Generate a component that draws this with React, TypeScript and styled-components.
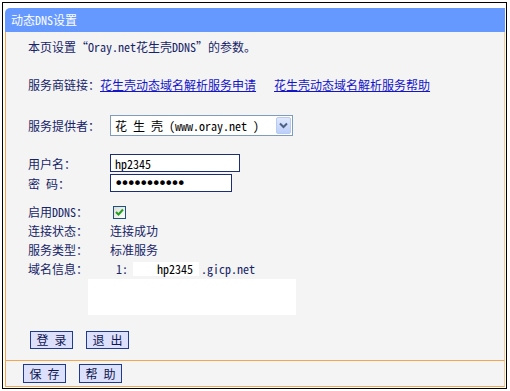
import React from 'react';
import styled, { createGlobalStyle } from 'styled-components';

const GlobalStyle = createGlobalStyle`
  html, body {
    margin: 0;
    padding: 0;
    background: #fff;
  }
  body {
    font-family: "Noto Sans CJK SC", "Liberation Sans", sans-serif;
    font-size: 12px;
    font-feature-settings: "hwid";
    color: #172468;
  }
`;

const Frame = styled.div`
  box-sizing: border-box;
  width: 505px;
  height: 387px;
  margin: 2px 0 0 2px;
  padding: 5px 1px 1px 2px;
  border: 1px solid #000;
  display: flex;
  flex-direction: column;
`;

const Header = styled.div`
  height: 24px;
  line-height: 24px;
  padding-left: 6px;
  background: #6699ff;
  color: #fff;
  border-top-left-radius: 5px;
`;

const Body = styled.div`
  box-sizing: border-box;
  height: 328px;
  padding: 7px 0 0 22px;
  background: #f4f4f4;
  border-left: 1px solid #f3a650;
  border-right: 1px solid #f6c98c;
  display: flex;
  flex-direction: column;
`;

const Footer = styled.div`
  box-sizing: border-box;
  height: 27px;
  padding: 3px 0 0 17px;
  background: #f4f4f4;
  border: 1px solid #f3a650;
  border-right-color: #f6c98c;
  display: flex;
  gap: 13px;
`;

const Line = styled.div<{ $top?: number }>`
  margin-top: ${p => p.$top ?? 0}px;
  line-height: 16px;
  display: flex;
  gap: 18px;
`;

const Link = styled.a`
  color: #1515c8;
  text-decoration: underline;
  cursor: pointer;
`;

const Field = styled.div<{ $top: number; $h: number }>`
  margin-top: ${p => p.$top}px;
  height: ${p => p.$h}px;
  display: flex;
  align-items: center;
`;

const Label = styled.span`
  width: 82px;
  flex: none;
`;

const SelectBox = styled.div`
  box-sizing: border-box;
  width: 183px;
  height: 21px;
  padding-left: 4px;
  border: 1px solid #7f9db9;
  background: #fff;
  color: #000;
  display: flex;
  align-items: center;
  justify-content: space-between;
`;

const DropButton = styled.span`
  box-sizing: border-box;
  width: 15px;
  height: 17px;
  margin-right: 1px;
  border: 1px solid #b8cbf2;
  border-radius: 2px;
  background: linear-gradient(#dfe8fd, #bccff8);
  display: flex;
  align-items: center;
  justify-content: center;
`;

const TextInput = styled.input<{ $w: number }>`
  box-sizing: border-box;
  width: ${p => p.$w}px;
  height: 18px;
  margin: 0;
  padding: 0 4px;
  border: 1px solid #1c2f6e;
  background: #fff;
  color: #000;
  font: inherit;
  outline: none;

  &[type='password'] {
    font-family: "DejaVu Sans", sans-serif;
    font-size: 16px;
    letter-spacing: -3.2px;
    padding-left: 3px;
  }
`;

const Check = styled.span`
  box-sizing: border-box;
  width: 13px;
  height: 13px;
  margin: 2px 0 0 3px;
  border: 1px solid #1c5180;
  background: linear-gradient(135deg, #dcdcd7, #fff);
  display: flex;
  align-items: center;
  justify-content: center;
`;

const Index = styled.span`
  margin-left: 6px;
`;

const Masked = styled.span`
  margin-left: 5px;
  width: 66px;
  height: 14px;
  line-height: 14px;
  padding-left: 24px;
  box-sizing: border-box;
  background: #fff;
  color: #000;
`;

const Suffix = styled.span`
  margin-left: 2px;
`;

const Blank = styled.div`
  margin: 1px 0 0 60px;
  width: 208px;
  height: 36px;
  background: #fff;
`;

const Buttons = styled.div`
  margin-top: 16px;
  padding-left: 2px;
  display: flex;
  gap: 13px;
`;

const Button = styled.button<{ $h: number }>`
  box-sizing: border-box;
  width: 43px;
  height: ${p => p.$h}px;
  padding: 0;
  border: 1px solid #1f3c8c;
  background: #dde0fb;
  color: #0d1650;
  font: inherit;
  line-height: 1;
  cursor: pointer;
`;

const ChevronDown = () => (
  <svg width="9" height="7" viewBox="0 0 9 7">
    <path d="M1 1.5 L4.5 5 L8 1.5" fill="none" stroke="#4d6185" strokeWidth="2" />
  </svg>
);

const Tick = () => (
  <svg width="9" height="9" viewBox="0 0 9 9">
    <path d="M1 4 L3.5 6.5 L8 1.5" fill="none" stroke="#21a121" strokeWidth="2" />
  </svg>
);

export default function App() {
  return (
    <>
      <GlobalStyle />
      <Frame>
        <Header>动态DNS设置</Header>
        <Body>
          <Line>本页设置“Oray.net花生壳DDNS”的参数。</Line>
          <Line $top={22}>
            <span>
              服务商链接：<Link>花生壳动态域名解析服务申请</Link>
            </span>
            <Link>花生壳动态域名解析服务帮助</Link>
          </Line>
          <Field $top={22} $h={21}>
            <Label>服务提供者：</Label>
            <SelectBox>
              <span>花 生 壳 （www.oray.net ）</span>
              <DropButton>
                <ChevronDown />
              </DropButton>
            </SelectBox>
          </Field>
          <Field $top={18} $h={18}>
            <Label>用户名：</Label>
            <TextInput $w={130} type="text" defaultValue="hp2345" />
          </Field>
          <Field $top={2} $h={18}>
            <Label>密 码：</Label>
            <TextInput $w={122} type="password" defaultValue="12345678901" />
          </Field>
          <Field $top={10} $h={19}>
            <Label>启用DDNS：</Label>
            <Check>
              <Tick />
            </Check>
          </Field>
          <Field $top={0} $h={19}>
            <Label>连接状态：</Label>
            <span>连接成功</span>
          </Field>
          <Field $top={0} $h={19}>
            <Label>服务类型：</Label>
            <span>标准服务</span>
          </Field>
          <Field $top={0} $h={19}>
            <Label>域名信息：</Label>
            <Index>1:</Index>
            <Masked>hp2345</Masked>
            <Suffix>.gicp.net</Suffix>
          </Field>
          <Blank />
          <Buttons>
            <Button $h={18}>登 录</Button>
            <Button $h={18}>退 出</Button>
          </Buttons>
        </Body>
        <Footer>
          <Button $h={19}>保 存</Button>
          <Button $h={19}>帮 助</Button>
        </Footer>
      </Frame>
    </>
  );
}
